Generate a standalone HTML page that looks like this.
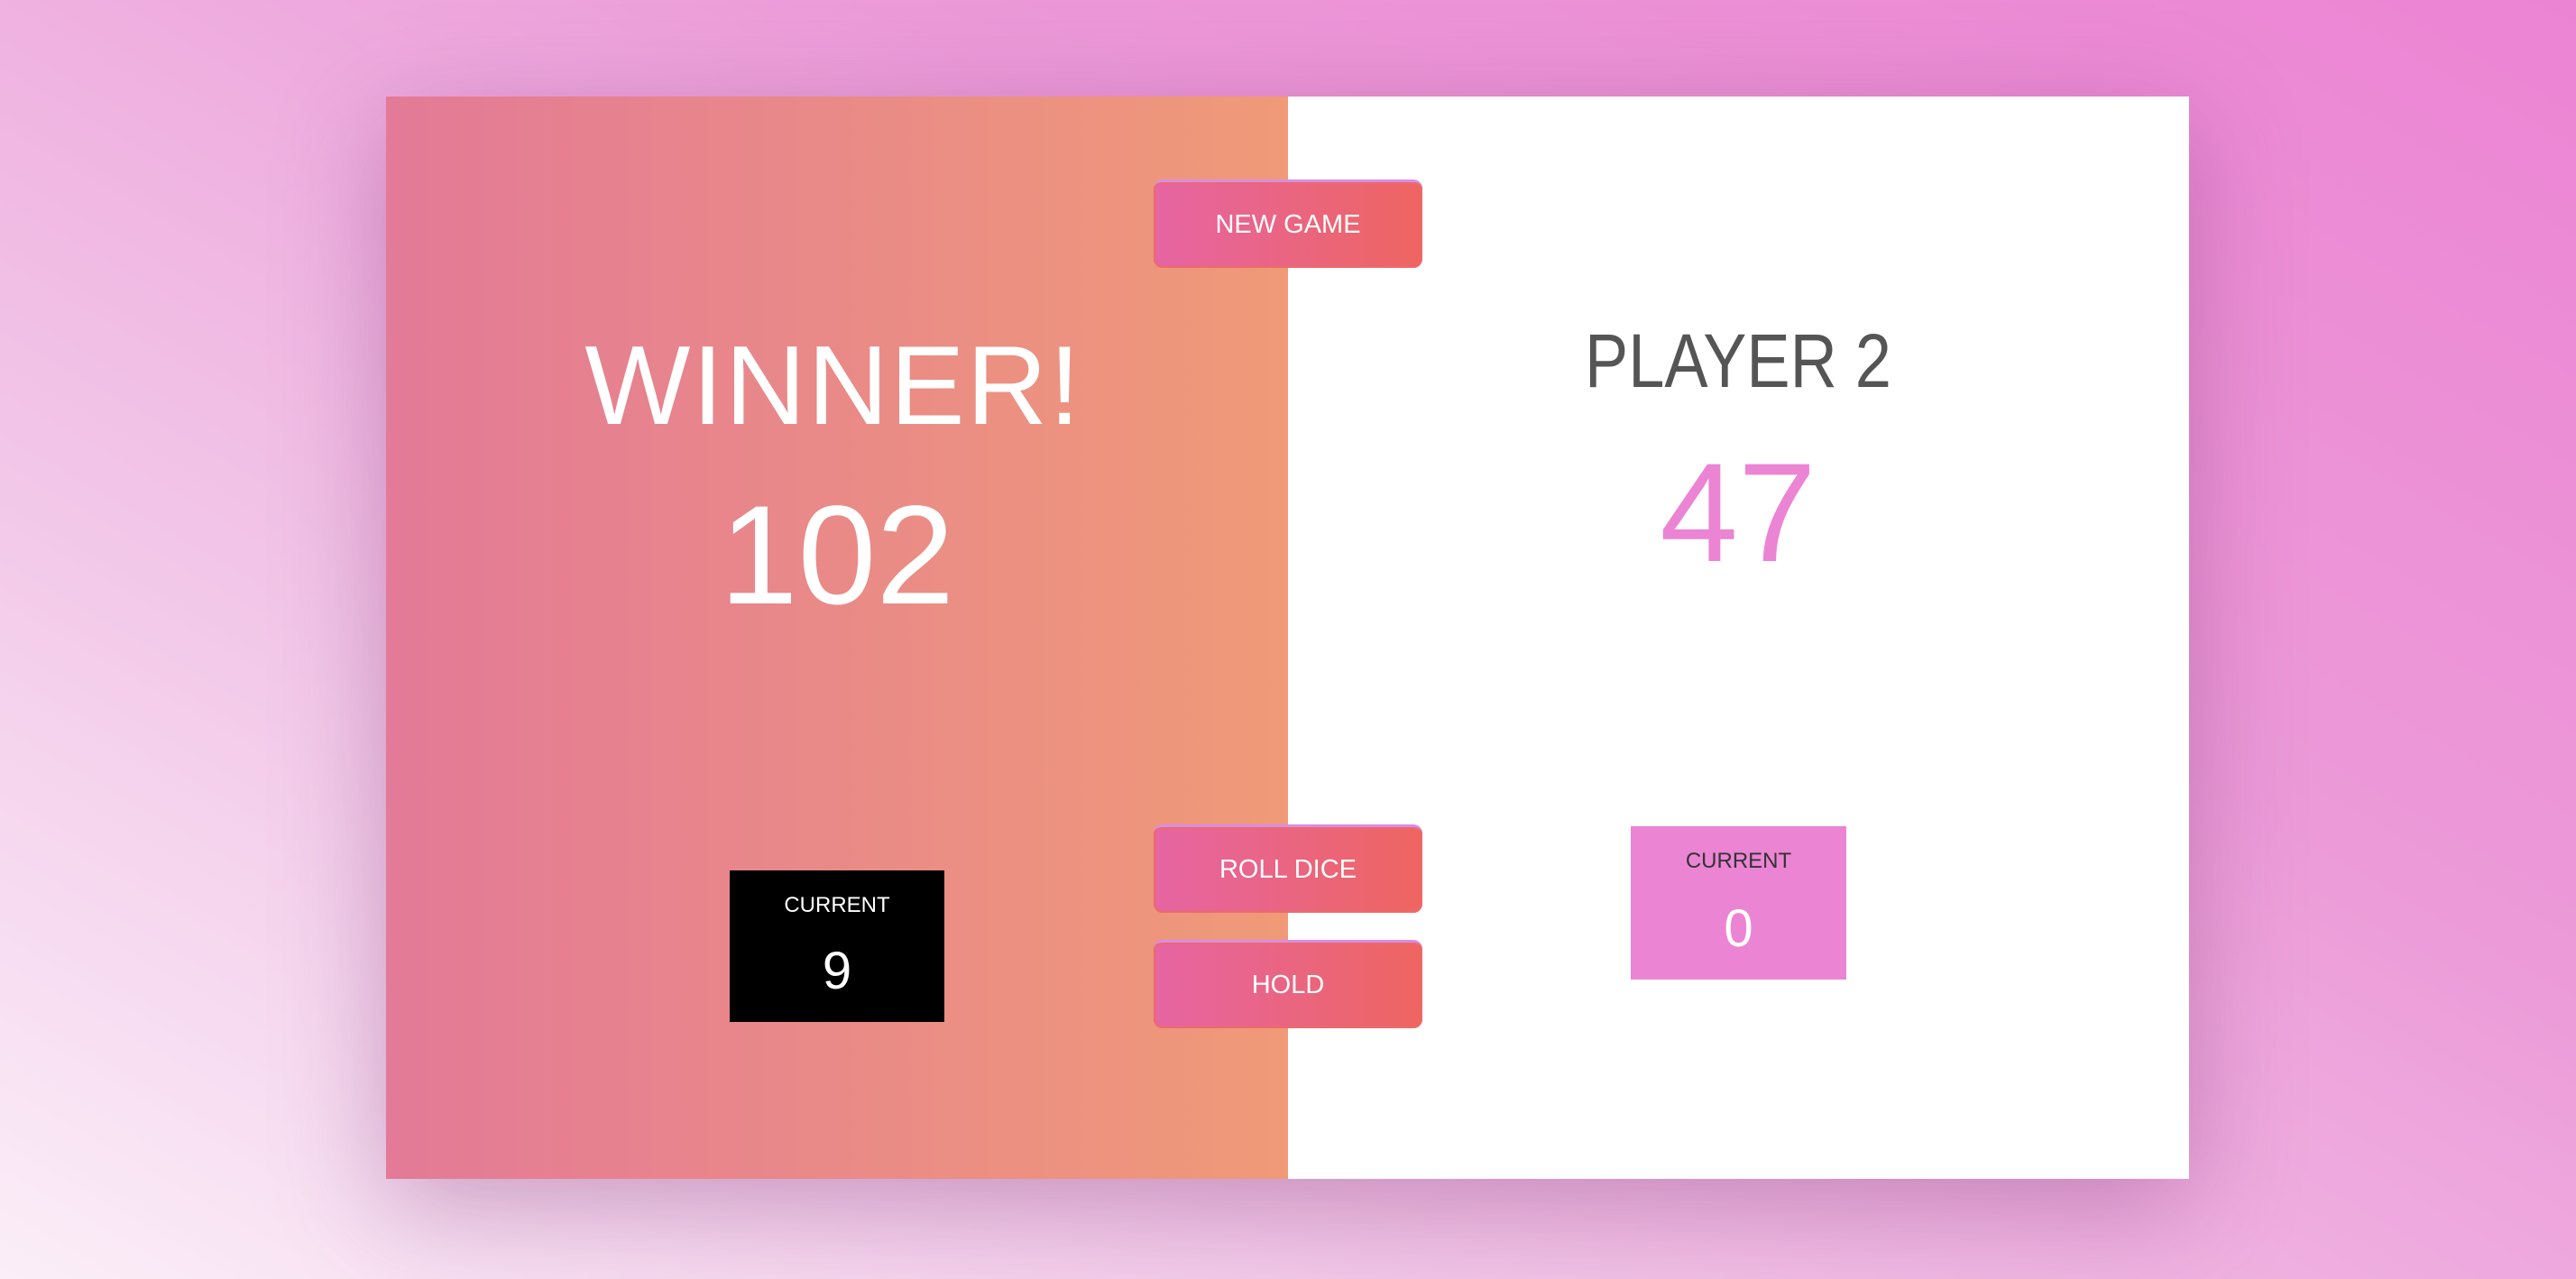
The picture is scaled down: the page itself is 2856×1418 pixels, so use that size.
<!DOCTYPE html>
<html><head><style>
html,body{margin:0;width:2856px;height:1418px;overflow:hidden;font-family:"Liberation Sans",sans-serif;}
body{background:linear-gradient(30deg,#fbeef8 0%,#f2c6e8 30%,#ec9ad8 65%,#ec84d4 100%);position:relative;}
.panel{position:absolute;left:428px;top:107px;width:1999px;height:1200px;background:#fff;box-shadow:0 30px 110px rgba(120,40,110,0.35);}
.left{position:absolute;left:0;top:0;width:1000px;height:1200px;background:linear-gradient(90deg,#e37a97,#f09a78);}
.t{position:absolute;line-height:1;white-space:nowrap;text-align:center;}
.btn{position:absolute;left:1279px;width:298px;height:98px;border-radius:10px;background:linear-gradient(90deg,#e665a3,#ee6560);border-top:3px solid #d98ce8;box-sizing:border-box;color:#fff;font-size:29px;display:flex;align-items:center;justify-content:center;box-shadow:0 0 0 2px #ec6a6a inset;}
</style></head><body>
<div class="panel"><div class="left"></div></div>
<div class="t" style="left:424px;width:1000px;top:366px;font-size:124px;color:#fff;letter-spacing:2px;">WINNER!</div>
<div class="t" style="left:428px;width:1000px;top:538px;font-size:156px;color:#fff;">102</div>
<div class="t" style="left:1427px;width:1000px;top:358px;font-size:84px;color:#555;transform:scaleX(0.86);">PLAYER 2</div>
<div class="t" style="left:1427px;width:1000px;top:491px;font-size:156px;color:#ec84d4;">47</div>
<div style="position:absolute;left:809px;top:965px;width:238px;height:168px;background:#000;"></div>
<div class="t" style="left:809px;width:238px;top:992px;font-size:24px;color:#fff;">CURRENT</div>
<div class="t" style="left:809px;width:238px;top:1048px;font-size:58px;color:#fff;">9</div>
<div style="position:absolute;left:1808px;top:916px;width:239px;height:170px;background:#ec84d4;"></div>
<div class="t" style="left:1808px;width:239px;top:943px;font-size:24px;color:#333;">CURRENT</div>
<div class="t" style="left:1808px;width:239px;top:1001px;font-size:58px;color:#fff;">0</div>
<div class="btn" style="top:199px;">NEW GAME</div>
<div class="btn" style="top:914px;">ROLL DICE</div>
<div class="btn" style="top:1042px;">HOLD</div>
</body></html>
